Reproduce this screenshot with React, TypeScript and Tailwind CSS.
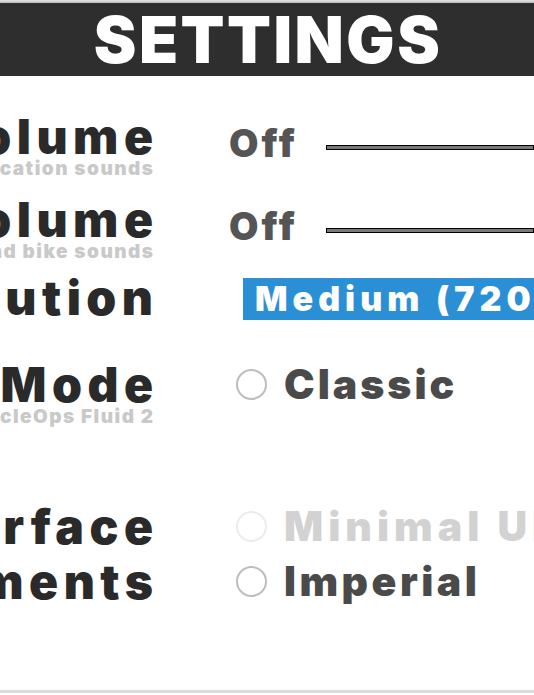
export default function App() {
  return (
    <div className="relative h-[695px] w-[534px] overflow-hidden bg-white font-['Inter',sans-serif]">
      {/* top edge + title bar */}
      <div className="h-[3px] bg-gradient-to-b from-[#e6e6e6] to-[#b9b9b9]" />
      <header className="flex h-[73px] items-center justify-center bg-[#2e2e2e]">
        <h1 className="pl-[2px] text-[64px] font-black leading-none tracking-[2.5px] text-white">SETTINGS</h1>
      </header>

      {/* Notification volume */}
      <div className="mt-[37px] flex h-[83px]">
        <div className="flex w-[153px] shrink-0 flex-col items-end overflow-hidden whitespace-nowrap">
          <span className="mr-[-5.5px] text-[48px] font-black leading-none tracking-[5.5px] text-[#2a2a2a]">Notification Volume</span>
          <span className="-mt-[2px] mr-[-1.5px] text-[19px] font-black leading-none tracking-[1.5px] text-[#c9c9c9]">Notification sounds</span>
        </div>
        <span className="ml-[76px] mt-[11px] text-[38px] font-black leading-none tracking-[3px] text-[#555]">Off</span>
        <div className="ml-[28px] mt-[32px] h-[5px] flex-1 border border-black bg-[#7a7a7a]" />
      </div>

      {/* Trainer volume */}
      <div className="flex h-[78px]">
        <div className="flex w-[153px] shrink-0 flex-col items-end overflow-hidden whitespace-nowrap">
          <span className="mr-[-5.5px] text-[48px] font-black leading-none tracking-[5.5px] text-[#2a2a2a]">Trainer Volume</span>
          <span className="-mt-[2px] mr-[-1.5px] text-[19px] font-black leading-none tracking-[1.5px] text-[#c9c9c9]">Trainer and bike sounds</span>
        </div>
        <span className="ml-[76px] mt-[11px] text-[38px] font-black leading-none tracking-[3px] text-[#555]">Off</span>
        <div className="ml-[28px] mt-[32px] h-[5px] flex-1 border border-black bg-[#7a7a7a]" />
      </div>

      {/* Resolution */}
      <div className="flex h-[87px]">
        <div className="flex w-[153px] shrink-0 justify-end overflow-hidden whitespace-nowrap">
          <span className="mr-[-5.5px] text-[48px] font-black leading-none tracking-[5.5px] text-[#2a2a2a]">Video Resolution</span>
        </div>
        <div className="ml-[90px] mt-[4px] flex h-[42px] flex-1 items-center overflow-hidden whitespace-nowrap bg-[#2b8fd6] pl-[12px]">
          <span className="text-[34px] font-black leading-none tracking-[5px] text-white">Medium (720p)</span>
        </div>
      </div>

      {/* Display mode */}
      <div className="flex h-[142px]">
        <div className="flex w-[153px] shrink-0 flex-col items-end overflow-hidden whitespace-nowrap">
          <span className="mr-[-5.5px] text-[48px] font-black leading-none tracking-[5.5px] text-[#2a2a2a]">Display Mode</span>
          <span className="-mt-[2px] mr-[-1.5px] text-[19px] font-black leading-none tracking-[1.5px] text-[#c9c9c9]">Requires CycleOps Fluid 2</span>
        </div>
        <div className="ml-[83px] flex h-[47px] items-center gap-[17px]">
          <span className="h-[31px] w-[31px] rounded-full border-2 border-[#bdbdbd]" />
          <span className="text-[41px] font-black leading-none tracking-[3px] text-[#4a4a4a]">Classic</span>
        </div>
      </div>

      {/* Interface */}
      <div className="flex h-[55px]">
        <div className="flex w-[153px] shrink-0 justify-end overflow-hidden whitespace-nowrap">
          <span className="mr-[-5.5px] text-[48px] font-black leading-none tracking-[5.5px] text-[#2a2a2a]">User Interface</span>
        </div>
        <div className="ml-[83px] flex h-[47px] items-center gap-[17px] whitespace-nowrap">
          <span className="h-[31px] w-[31px] shrink-0 rounded-full border-2 border-[#ececec]" />
          <span className="text-[41px] font-black leading-none tracking-[5px] text-[#d2d2d2]">Minimal UI</span>
        </div>
      </div>

      {/* Measurements */}
      <div className="flex h-[80px]">
        <div className="flex w-[153px] shrink-0 justify-end overflow-hidden whitespace-nowrap">
          <span className="mr-[-5.5px] text-[48px] font-black leading-none tracking-[5.5px] text-[#2a2a2a]">Measurements</span>
        </div>
        <div className="ml-[83px] flex h-[47px] items-center gap-[17px]">
          <span className="h-[31px] w-[31px] rounded-full border-2 border-[#bdbdbd]" />
          <span className="text-[41px] font-black leading-none tracking-[3.5px] text-[#4a4a4a]">Imperial</span>
        </div>
      </div>

      <div className="absolute inset-x-0 top-[690px] h-[3px] bg-[#dcdcdc]" />
    </div>
  )
}
